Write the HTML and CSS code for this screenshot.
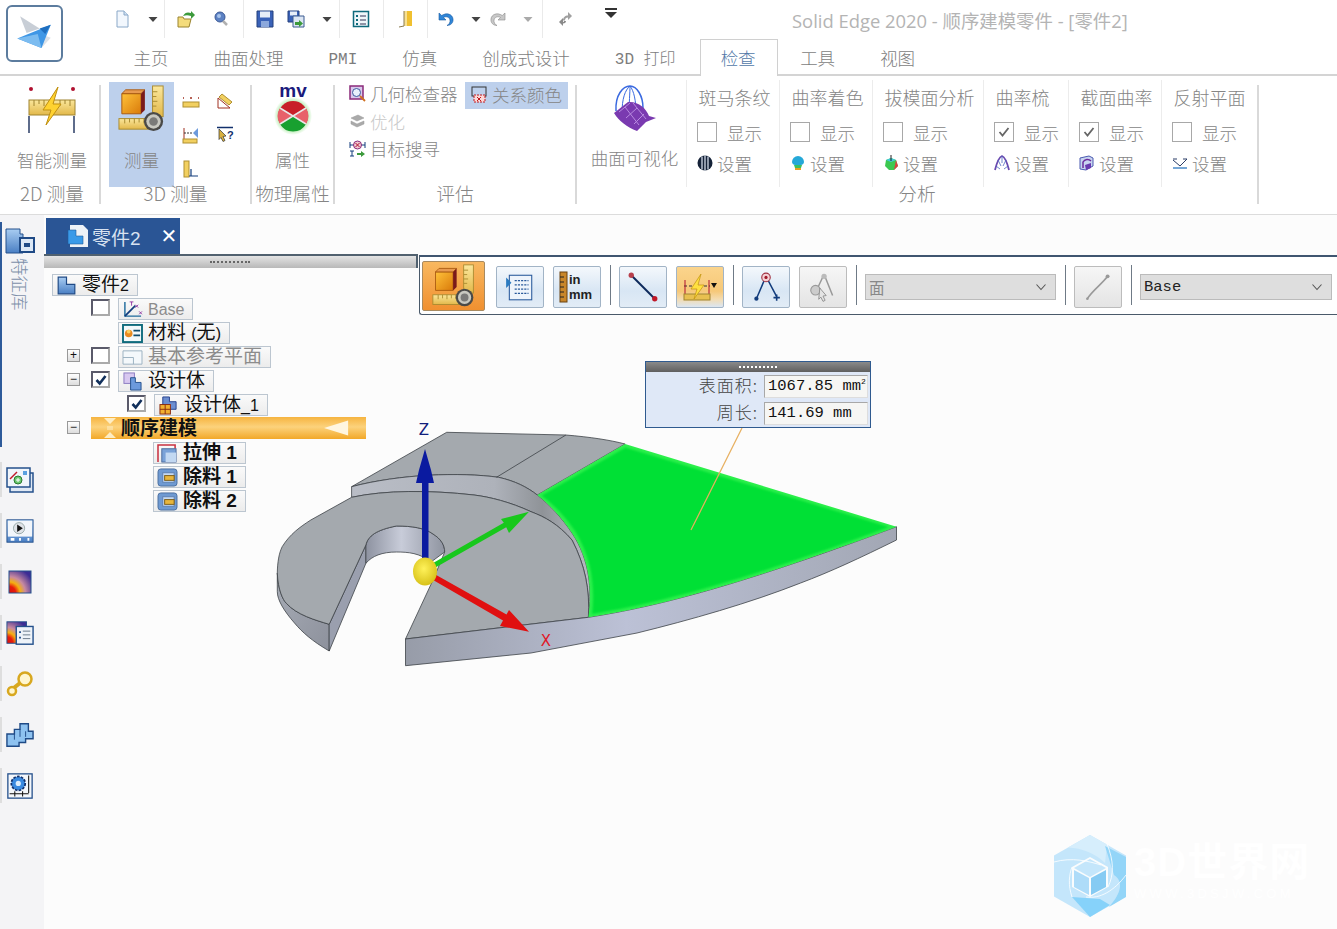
FILE: index.html
```html
<!DOCTYPE html>
<html lang="zh">
<head>
<meta charset="utf-8">
<title>Solid Edge 2020</title>
<link rel="stylesheet" href="styles.css">
</head>
<body>
<svg class="defs" width="0" height="0">
  <defs>
    <linearGradient id="gOrange" x1="0" y1="0" x2="1" y2="1"><stop offset="0" stop-color="#ffc23a"/><stop offset="1" stop-color="#d97a0a"/></linearGradient>
    <linearGradient id="gRuler" x1="0" y1="0" x2="0" y2="1"><stop offset="0" stop-color="#fbe79c"/><stop offset="1" stop-color="#e2b84a"/></linearGradient>
    <linearGradient id="gBlue" x1="0" y1="0" x2="0" y2="1"><stop offset="0" stop-color="#a9cdf2"/><stop offset="1" stop-color="#4a7fc4"/></linearGradient>
    <linearGradient id="gWallFront" x1="0" y1="0" x2="1" y2="0"><stop offset="0" stop-color="#979ca8"/><stop offset=".45" stop-color="#bcc1d6"/><stop offset="1" stop-color="#a2a7b4"/></linearGradient>
    <linearGradient id="gWallStep" x1="0" y1="0" x2="1" y2="0"><stop offset="0" stop-color="#b9bdc6"/><stop offset=".6" stop-color="#aeb2ba"/><stop offset=".8" stop-color="#8f9398"/><stop offset="1" stop-color="#b8bcc4"/></linearGradient>
    <linearGradient id="gHole" x1="0" y1="0" x2="1" y2="0"><stop offset="0" stop-color="#8d92a0"/><stop offset=".45" stop-color="#c8ccd9"/><stop offset="1" stop-color="#8f94a0"/></linearGradient>
    <linearGradient id="gOuter" x1="0" y1="0" x2="1" y2="1"><stop offset="0" stop-color="#a7acb6"/><stop offset="1" stop-color="#8d919c"/></linearGradient>
    <radialGradient id="gSphere" cx=".45" cy=".4" r=".6"><stop offset="0" stop-color="#fff25a"/><stop offset="1" stop-color="#d8c21a"/></radialGradient>
    <radialGradient id="gMv" cx=".5" cy=".5" r=".5"><stop offset=".7" stop-color="#a8e8a0"/><stop offset="1" stop-color="#ffffff"/></radialGradient>
    <radialGradient id="gHeat" cx="0" cy="1" r="1.2"><stop offset="0" stop-color="#d8100c"/><stop offset=".25" stop-color="#e81c0c"/><stop offset=".42" stop-color="#f4b010"/><stop offset=".62" stop-color="#c88aa0"/><stop offset="1" stop-color="#3c2c94"/></radialGradient>
    <filter id="fSoft" x="-5%" y="-5%" width="110%" height="110%"><feGaussianBlur stdDeviation=".9"/></filter>

    <symbol id="sMeasure" viewBox="0 0 50 50">
      <rect x="36" y="1" width="11" height="32" fill="url(#gRuler)" stroke="#a88a30"/>
      <path d="M36 7h5M36 12h4M36 17h5M36 22h4" stroke="#a88a30"/>
      <rect x="1" y="35" width="32" height="11" fill="url(#gRuler)" stroke="#a88a30"/>
      <path d="M7 35v5M12 35v4M17 35v5M22 35v4M27 35v5" stroke="#a88a30"/>
      <path d="M4 9h20v21H4z" fill="url(#gOrange)" stroke="#a85a10"/>
      <path d="M4 9l4-4h20l-4 4z" fill="#e89a50" stroke="#a85a10"/>
      <path d="M24 9l4-4v21l-4 4z" fill="#7a1a1a"/>
      <circle cx="37" cy="38" r="10" fill="#4a4a48"/>
      <circle cx="37" cy="38" r="7.5" fill="#c8c8c0"/>
      <circle cx="37" cy="38" r="4.5" fill="#7a7a78"/>
    </symbol>
    <symbol id="sZebra" viewBox="0 0 16 16">
      <circle cx="8" cy="8" r="7.5" fill="#152238"/>
      <path d="M5 1.5v13M8 .5v15M11 1.5v13" stroke="#dfe8f5" stroke-width="1.2"/>
    </symbol>
    <symbol id="sPart" viewBox="0 0 16 16">
      <path d="M1 1h7v6h7v8H1z" fill="url(#gBlue)" stroke="#1f4a86"/>
    </symbol>
    <symbol id="sCut" viewBox="0 0 22 20">
      <rect x="1" y="1" width="20" height="18" rx="3" fill="#6f9ad2" stroke="#4a6e9e"/>
      <rect x="6" y="5" width="12" height="10" fill="#c6daf2" stroke="#5d7fb0"/>
      <rect x="8" y="8" width="10" height="5" fill="#e8b63c" stroke="#7a5c18"/>
    </symbol>
    <symbol id="sCheckMark" viewBox="0 0 12 12">
      <path d="M1.5 6l3.2 3.5L10.5 2" fill="none" stroke="#12305c" stroke-width="2.6"/>
    </symbol>
    <symbol id="sDown" viewBox="0 0 20 20">
      <path d="M5.5 8h9L10 13z" fill="#444"/>
    </symbol>
    <symbol id="sGrayDown" viewBox="0 0 20 20">
      <path d="M5.5 8h9L10 13z" fill="#aaa"/>
    </symbol>
    <symbol id="sChev" viewBox="0 0 12 8">
      <path d="M1.5 1.5L6 6.5l4.5-5" fill="none" stroke="#555" stroke-width="1.1"/>
    </symbol>
  </defs>
</svg>

<header class="top">
  <div class="appcol">
    <div class="appbtn">
      <svg class="applogo" viewBox="0 0 57 57">
        <path d="M13 10l21 13-14 5z" fill="#c8ced6"/>
        <path d="M36 44l10-11-14-5z" fill="#dde2e8"/>
        <path d="M10 34l36-15-10 25z" fill="#3f97e6"/>
        <path d="M10 34l22-5 4 15z" fill="#7cbcf0"/>
        <path d="M34 23l12-4-6 10z" fill="#1f6fc0"/>
      </svg>
    </div>
  </div>
  <div class="topmain">
    <div class="titlebar">
      <div class="qat">
        <div class="qgrp g1">
          <svg class="qb" viewBox="0 0 20 20"><path d="M5 2h7l4 4v12H5z" fill="#f2f7fd" stroke="#8aa8c8"/><path d="M12 2v4h4" fill="#cfe0f2" stroke="#8aa8c8"/></svg>
          <svg class="qb"><use href="#sDown"/></svg>
        </div>
        <div class="qgrp g2">
          <svg class="qb" viewBox="0 0 20 20"><path d="M2 8h5l1 2h7l-2 8H2z" fill="#f4dc7c" stroke="#9a8430"/><path d="M7 7c2-4 5-4 8-3V2l4 4-4 4V7c-3-1-5-1-8 0z" fill="#3c9a3c"/></svg>
          <svg class="qb" viewBox="0 0 20 20"><circle cx="9" cy="8" r="5" fill="#5c82c4" stroke="#3c5a96"/><circle cx="8" cy="7" r="2" fill="#a8c4ec"/><path d="M12 12l4 4" stroke="#b0b0b0" stroke-width="2.5"/></svg>
        </div>
        <div class="qgrp g3">
          <svg class="qb" viewBox="0 0 20 20"><path d="M2 2h16v16H2z" fill="#3a62b8" stroke="#24407c"/><rect x="5" y="2.500" width="10" height="6" fill="#e8eef8"/><rect x="6" y="12" width="8" height="6" fill="#8ca8dc"/></svg>
          <svg class="qb" viewBox="0 0 20 20"><path d="M2 2h11v11H2z" fill="#3a62b8" stroke="#24407c"/><rect x="4" y="2.500" width="7" height="4" fill="#e8eef8"/><path d="M7 7h11v11H7z" fill="#dce6f4" stroke="#3a5a90"/><path d="M9 13h4v-2l4 3.500-4 3.500v-2H9z" fill="#3c9a3c"/></svg>
          <svg class="qb"><use href="#sDown"/></svg>
        </div>
        <div class="qgrp g4">
          <svg class="qb" viewBox="0 0 20 20"><rect x="2.500" y="2.500" width="15" height="15" fill="#eef6fa" stroke="#0e6a7c" stroke-width="1.500"/><path d="M5 6h2v2H5zM5 10h2v2H5zM5 14h2v2H5z" fill="#0e6a7c"/><path d="M9 7h6M9 11h6M9 15h6" stroke="#335"/></svg>
        </div>
        <div class="qgrp g4">
          <svg class="qb" viewBox="0 0 20 20"><path d="M9 2h8v15H9z" fill="#f0c030"/><path d="M9 2h3v15H9z" fill="#f8e090"/><path d="M9 2v15l-5 1" fill="none" stroke="#8a7a50"/></svg>
        </div>
        <div class="qgrp g6">
          <svg class="qb" viewBox="0 0 20 20"><path d="M3 4v7h7L7.500 8.500C10 7 13.500 8 14 11c.4 2.500-1 4.500-3 5.500 4 0 6.500-3 6-6.500C16.500 5.500 11 3 5.700 6.500z" fill="#2f86d8" stroke="#1c5aa0" stroke-width=".6"/></svg>
          <svg class="qb"><use href="#sDown"/></svg>
          <svg class="qb redo" viewBox="0 0 20 20"><path d="M17 4v7h-7l2.500-2.500C10 7 6.500 8 6 11c-.4 2.500 1 4.500 3 5.500-4 0-6.500-3-6-6.500C3.500 5.500 9 3 14.300 6.500z" fill="#c8c8c8" stroke="#8a8a8a" stroke-width=".6"/></svg>
          <svg class="qb"><use href="#sGrayDown"/></svg>
        </div>
        <div class="qgrp g7">
          <svg class="qb" viewBox="0 0 20 20"><path d="M13 3l4 4-4 4V8.500c-2 0-3 1-3 3H8c0-3 2-5 5-5z" fill="#a0a0a0"/><path d="M8 9l-4 4 4 4v-2.500c2 0 3-1 3-2.500H9c0 1-.5 1-1 1z" fill="#8a8a8a"/></svg>
          <svg class="qb more" viewBox="0 0 20 20"><path d="M4 3h12v2H4z" fill="#333"/><path d="M4 7h12l-6 6z" fill="#333"/></svg>
        </div>
      </div>
      <div class="wintitle">Solid Edge 2020 - 顺序建模零件 - [零件2]</div>
    </div>
    <nav class="tabs">
      <div class="tab">主页</div>
      <div class="tab">曲面处理</div>
      <div class="tab mono">PMI</div>
      <div class="tab">仿真</div>
      <div class="tab">创成式设计</div>
      <div class="tab mono">3D 打印</div>
      <div class="tab active">检查</div>
      <div class="tab">工具</div>
      <div class="tab">视图</div>
    </nav>
  </div>
</header>

<section class="ribbon">
  <div class="group g-2d">
    <div class="gbody center">
      <div class="bigbtn">
        <svg class="bigicon smart" viewBox="0 0 48 48">
          <circle cx="3" cy="3" r="2" fill="#b01030"/><circle cx="45" cy="3" r="2" fill="#b01030"/>
          <rect x="1" y="14" width="46" height="15" fill="url(#gRuler)" stroke="#a08430"/>
          <path d="M6 14v6M11 14v4M16 14v6M32 14v6M37 14v4M42 14v6" stroke="#a08430"/>
          <path d="M1 30v17M46 30v17" stroke="#2a3c66" stroke-width="1.500"/>
          <path d="M30 1L15 24h8l-5 15 15-21h-8z" fill="#ffd230" stroke="#c09010"/>
        </svg>
        <span class="biglabel">智能测量</span>
      </div>
    </div>
    <div class="glabel">2D 测量</div>
  </div>
  <div class="vsep"></div>

  <div class="group g-3d">
    <div class="gbody row3d">
      <div class="bigbtn hl">
        <svg class="bigicon meas"><use href="#sMeasure"/></svg>
        <span class="biglabel">测量</span>
      </div>
      <div class="smgrid">
        <svg class="i18" viewBox="0 0 18 18"><path d="M1 6h1M8 6h2M16 6h1" stroke="#a03020" stroke-width="1.500"/><rect x="1" y="10" width="16" height="5" fill="#f2d060" stroke="#b09030"/></svg>
        <svg class="i18" viewBox="0 0 18 18"><path d="M2 16V6l12 10z" fill="none" stroke="#a03020"/><path d="M6 2l10 8-3 3L3 5z" fill="#f2d060" stroke="#b09030"/></svg>
        <svg class="i18" viewBox="0 0 18 18"><path d="M2 2v12" stroke="#a03020"/><path d="M2 7h9" stroke="#333" stroke-dasharray="2 1"/><path d="M16 2l-5 5 5 5z" fill="#6c9adc"/><rect x="1" y="13" width="14" height="4" fill="#f2d060" stroke="#b09030"/></svg>
        <svg class="i18" viewBox="0 0 18 18"><path d="M1 1.500h16" stroke="#12306c" stroke-width="1.500"/><path d="M3 3l7 7-3 .5 2 4-2 1-2-4-2 2z" fill="#d8b040" stroke="#333" stroke-width=".7"/><text class="qmark" x="11" y="13">?</text></svg>
        <svg class="i18" viewBox="0 0 18 18"><rect x="2" y="1" width="5" height="16" fill="#f2d060" stroke="#b09030"/><path d="M7 16h9M9 9v7" stroke="#123c7c" stroke-width="1.200"/></svg>
      </div>
    </div>
    <div class="glabel">3D 测量</div>
  </div>
  <div class="vsep"></div>

  <div class="group g-prop">
    <div class="gbody center">
      <div class="bigbtn">
        <svg class="bigicon mv" viewBox="0 -8 38 58">
          <text class="mvtext" x="19" y="12">mv</text>
          <circle cx="19" cy="31" r="19" fill="url(#gMv)"/>
          <circle cx="19" cy="31" r="15" fill="#c81f28"/>
          <path d="M19 31L6 39a15 15 0 0 0 26 0z" fill="#18a030"/>
          <path d="M19 31L6 23a15 15 0 0 0 0 16z M19 31l13-8a15 15 0 0 1 0 16z" fill="#e8606a"/>
          <path d="M6 23l26 16M32 23L6 39" stroke="#e8e8e8" stroke-width="1.500"/>
        </svg>
        <span class="biglabel">属性</span>
      </div>
    </div>
    <div class="glabel">物理属性</div>
  </div>
  <div class="vsep"></div>

  <div class="group g-eval">
    <div class="gbody evalgrid">
      <div class="evalcol">
        <div class="smrow">
          <svg class="i17" viewBox="0 0 17 17"><rect x="1" y="1" width="13" height="13" fill="#d8c8ec" stroke="#8a2a7a" stroke-width="1.500"/><circle cx="7.500" cy="7.500" r="4" fill="#e8f0fc" stroke="#3a5a9c"/><path d="M11 11l5 5" stroke="#d07020" stroke-width="1.800"/></svg>
          <span>几何检查器</span>
        </div>
        <div class="smrow disabled">
          <svg class="i17" viewBox="0 0 17 17"><path d="M2 5l7-3 6 3-7 3zM2 8l6 3 7-3v3l-7 3-6-3z" fill="#aaa" stroke="#999" stroke-width=".5"/></svg>
          <span>优化</span>
        </div>
        <div class="smrow">
          <svg class="i17" viewBox="0 0 17 17"><path d="M1 2v6M16 2v6M1 5h15" stroke="#123c7c"/><circle cx="8.500" cy="5" r="4" fill="#f0c8d0" stroke="#8a2a7a"/><path d="M6.500 3l4 4M10.500 3l-4 4" stroke="#b01030"/><path d="M1 11h4M3 11v5M1 16h4" stroke="#123c7c"/><path d="M8 13h4v-2l4 3-4 3v-2H8z" fill="#3c9a3c"/></svg>
          <span>目标搜寻</span>
        </div>
      </div>
      <div class="smrow hl relcolor">
        <svg class="i17" viewBox="0 0 17 17"><rect x="1" y="1" width="14" height="9" fill="none" stroke="#333"/><rect x="3" y="9" width="11" height="7" fill="#fbd8d8" stroke="#c0181c" stroke-dasharray="2 1"/><path d="M6 11l4 4M10 11l-4 4" stroke="#c0181c"/></svg>
        <span>关系颜色</span>
      </div>
    </div>
    <div class="glabel">评估</div>
  </div>
  <div class="vsep"></div>

  <div class="group g-ana">
    <div class="gbody analysis">
      <div class="sub s-vis">
        <div class="bigbtn">
          <svg class="bigicon vis" viewBox="0 0 44 48">
            <path d="M3 26C2 10 10 1 17 1s13 10 13 22" fill="none" stroke="#3a6ae0" stroke-width="1.500"/>
            <path d="M9 28C9 14 12 5 17 1M16 30C16 18 17 8 17 1M23 28C23 16 21 6 17 1" fill="none" stroke="#3a6ae0"/>
            <path d="M1 28l14-11c10-1 18 6 21 14l7 2-10 4-9 9C14 42 6 36 1 28z" fill="#7a3ab0"/>
            <path d="M6 27l11-9M13 33l11-10M21 39l10-10M12 22l14 18M20 18l13 16" stroke="#b88ae0"/>
          </svg>
          <span class="biglabel">曲面可视化</span>
        </div>
      </div>
      <div class="sub s92">
        <div class="subtitle">斑马条纹</div>
        <div class="chkrow"><span class="chk"></span><span>显示</span></div>
        <div class="setrow"><svg class="i16"><use href="#sZebra"/></svg><span>设置</span></div>
      </div>
      <div class="sub s93">
        <div class="subtitle">曲率着色</div>
        <div class="chkrow"><span class="chk"></span><span>显示</span></div>
        <div class="setrow">
          <svg class="i16" viewBox="0 0 16 16"><path d="M2 7a6 6 0 0 1 12 0c0 2-2 3-3 3H5C4 10 2 9 2 7z" fill="#25a8d8"/><path d="M4 10h8l-1 3H5z" fill="#3cc060"/><path d="M5 13h6v2H5z" fill="#e8a020"/></svg>
          <span>设置</span>
        </div>
      </div>
      <div class="sub s111">
        <div class="subtitle">拔模面分析</div>
        <div class="chkrow"><span class="chk"></span><span>显示</span></div>
        <div class="setrow">
          <svg class="i16" viewBox="0 0 16 16"><path d="M3 5l5-2 5 2 2 6-4 4H6l-4-4z" fill="#3cc850"/><path d="M13 5l2 6-4 4z" fill="#d84040"/><path d="M3 5l5-2 5 2-5 2z" fill="#40c8d8"/><path d="M8 6V0" stroke="#222"/></svg>
          <span>设置</span>
        </div>
      </div>
      <div class="sub s85">
        <div class="subtitle">曲率梳</div>
        <div class="chkrow"><span class="chk on"><svg class="tick" viewBox="0 0 12 12"><path d="M1.500 6l3 3.500L10.500 2" fill="none" stroke="#666" stroke-width="1.800"/></svg></span><span>显示</span></div>
        <div class="setrow">
          <svg class="i16" viewBox="0 0 16 16"><path d="M1 15C3 7 5 2 8 1c3 1 5 6 7 14" fill="none" stroke="#6a4ab0" stroke-width="1.800"/><path d="M8 1v7M4 5l3 6M12 5l-3 6M2 11l4 3M14 11l-4 3" stroke="#4a6ac0" stroke-width=".8"/></svg>
          <span>设置</span>
        </div>
      </div>
      <div class="sub s93">
        <div class="subtitle">截面曲率</div>
        <div class="chkrow"><span class="chk on"><svg class="tick" viewBox="0 0 12 12"><path d="M1.500 6l3 3.500L10.500 2" fill="none" stroke="#666" stroke-width="1.800"/></svg></span><span>显示</span></div>
        <div class="setrow">
          <svg class="i16" viewBox="0 0 16 16"><path d="M1 3l9-2 4 2v8l-7 4-6-1z" fill="#c8d4f0" stroke="#4a5ab0"/><path d="M4 13V7a5 5 0 0 1 8-1" fill="none" stroke="#6a2a9c" stroke-width="1.500"/><path d="M6 10l6-2v5l-5 2z" fill="#6a3ab0"/></svg>
          <span>设置</span>
        </div>
      </div>
      <div class="sub s95">
        <div class="subtitle">反射平面</div>
        <div class="chkrow"><span class="chk"></span><span>显示</span></div>
        <div class="setrow">
          <svg class="i16" viewBox="0 0 16 16"><path d="M1 5l7 6 7-7M1 4h4M11 4h4" fill="none" stroke="#2a3c66"/><path d="M1 13h14" stroke="#4a8ac8" stroke-width="1.500"/></svg>
          <span>设置</span>
        </div>
      </div>
    </div>
    <div class="glabel">分析</div>
  </div>
  <div class="vsep"></div>
</section>

<main class="main">
  <aside class="rail">
    <div class="railtab">
      <svg class="railhead" viewBox="0 0 30 26">
        <path d="M1 1h14v5h3v19H1z" fill="url(#gBlue)" stroke="#24508c"/>
        <rect x="15" y="10" width="14" height="14" fill="#dce8f6" stroke="#1f4a86" stroke-width="2"/>
        <rect x="19" y="15" width="6" height="4" fill="#1f4a86"/>
      </svg>
      <div class="railtext">特征库</div>
    </div>
    <div class="railicons">
      <div class="rcell">
        <svg class="ri" viewBox="0 0 28 26"><rect x="4" y="6" width="23" height="19" fill="#dfe8f4" stroke="#24508c" stroke-width="1.500"/><rect x="1" y="1" width="23" height="19" fill="#f0f5fb" stroke="#24508c" stroke-width="1.500"/><path d="M4 12l7-7" stroke="#c01828" stroke-width="1.500"/><circle cx="12" cy="13" r="4" fill="#6cc870" stroke="#2a7a30"/><path d="M10 13h4M12 11v4" stroke="#fff"/><rect x="17" y="4" width="4" height="4" fill="#5aa0e0"/></svg>
      </div>
      <div class="rcell">
        <svg class="ri" viewBox="0 0 30 26"><rect x="1" y="1" width="28" height="24" fill="url(#gBlue)" stroke="#24508c"/><rect x="2" y="2" width="26" height="17" fill="#f2f6fb"/><circle cx="14" cy="10" r="6" fill="#dfe3e8" stroke="#9aa"/><path d="M12 6l6 4-6 4z" fill="#111"/><path d="M5 22h4M14 22h2M23 22h2" stroke="#fff" stroke-width="3"/></svg>
      </div>
      <div class="rcell">
        <svg class="ri" viewBox="0 0 26 26"><rect x="2" y="2" width="22" height="22" fill="url(#gHeat)" stroke="#24508c"/></svg>
      </div>
      <div class="rcell">
        <svg class="ri" viewBox="0 0 30 26"><rect x="1" y="1" width="21" height="23" fill="url(#gHeat)" stroke="#24508c"/><rect x="11" y="6" width="18" height="19" fill="#eef3f9" stroke="#24508c" stroke-width="1.500"/><path d="M14 11h2v2h-2zM14 17h2v2h-2z" fill="#24508c"/><path d="M18 11h8M18 15h8M18 19h8" stroke="#678"/></svg>
      </div>
      <div class="rcell">
        <svg class="ri" viewBox="0 0 28 26"><circle cx="19" cy="8" r="6.500" fill="#fff6d0" stroke="#d8a820" stroke-width="2.500"/><path d="M14 12L4 20" stroke="#d8a820" stroke-width="4"/><circle cx="6" cy="20" r="4" fill="#fff6d0" stroke="#d8a820" stroke-width="2.500"/></svg>
      </div>
      <div class="rcell">
        <svg class="ri" viewBox="0 0 30 26"><path d="M1 12h8V7h6V1h9v8h5v8h-8v4h-7v4H1z" fill="#8ec2f0" stroke="#1f4a86" stroke-width="1.500"/><path d="M9 12v6M15 7v8M21 9v6" stroke="#1f4a86"/></svg>
      </div>
      <div class="rcell">
        <svg class="ri" viewBox="0 0 30 30"><rect x="1" y="1" width="28" height="28" fill="#f4f7fb" stroke="#24508c" stroke-width="1.500"/><circle cx="13" cy="12" r="8" fill="#3a8ae0" stroke="#12306c" stroke-width="2" stroke-dasharray="3 1.500"/><circle cx="13" cy="12" r="3" fill="#dcecfb"/><path d="M25 3v20M3 24h22M9 21v6M18 21v6" stroke="#111" stroke-width="1.200"/></svg>
      </div>
    </div>
  </aside>

  <div class="workspace">
    <div class="tabstrip">
      <div class="doctab">
        <svg class="docicon" viewBox="0 0 22 24"><path d="M3 1h13l5 5v17H3z" fill="#eef2f7"/><path d="M1 6h8v6h7v8H1z" fill="#3a9ae8" stroke="#1f5a9c" stroke-width=".6"/></svg>
        <span class="docname">零件2</span>
        <span class="docclose">✕</span>
      </div>
    </div>
    <div class="grip"><span class="dots"></span></div>

    <div class="tree">
      <div class="row">
        <div class="chip">
          <svg class="chipicon"><use href="#sPart"/></svg><span>零件<i class="la">2</i></span>
        </div>
      </div>
      <div class="row l1">
        <span class="tc"></span>
        <div class="chip muted">
          <svg class="chipicon" viewBox="0 0 22 20"><path d="M3 2v15h17" fill="none" stroke="#1f6a9c" stroke-width="1.500"/><path d="M3 17L14 6" stroke="#123c7c" stroke-width="1.800"/><path d="M8 2h4M10 2v4M14 5l3 3M17 5l-3 3M18 12l3 3M21 12l-3 3" stroke="#8a2a9c" stroke-width=".9"/></svg><span><i class="la">Base</i></span>
        </div>
      </div>
      <div class="row l2">
        <div class="chip">
          <svg class="chipicon" viewBox="0 0 22 20"><rect x="1" y="1" width="20" height="18" fill="#f2f8fa" stroke="#0e6a7c" stroke-width="2"/><circle cx="7" cy="10" r="4" fill="#e88a20"/><circle cx="7" cy="8" r="2" fill="#f8d060"/><path d="M12 7h7M12 12h7" stroke="#0e4a6c" stroke-width="1.800"/></svg><span>材料 <i class="la">(</i>无<i class="la">)</i></span>
        </div>
      </div>
      <div class="row l0">
        <span class="exp">+</span><span class="tc"></span>
        <div class="chip muted">
          <svg class="chipicon" viewBox="0 0 22 20"><path d="M1 3h20v14H1z" fill="#f4f8fb" stroke="#9ab0c0"/><path d="M1 10h11v7" fill="none" stroke="#9ab0c0"/></svg><span>基本参考平面</span>
        </div>
      </div>
      <div class="row l0">
        <span class="exp">−</span><span class="tc"><svg class="cm"><use href="#sCheckMark"/></svg></span>
        <div class="chip">
          <svg class="chipicon" viewBox="0 0 22 20"><rect x="2" y="1" width="11" height="11" fill="#d8c8f0" stroke="#8a7ac0"/><path d="M9 6h5v5h6v8H9z" fill="#6c9adc" stroke="#24508c"/></svg><span>设计体</span>
        </div>
      </div>
      <div class="row l3">
        <span class="tc"><svg class="cm"><use href="#sCheckMark"/></svg></span>
        <div class="chip">
          <svg class="chipicon" viewBox="0 0 22 20"><path d="M5 1h7v5h7v8H5z" fill="#6c8ed0" stroke="#24408c"/><rect x="2" y="9" width="11" height="10" fill="#f2b030" stroke="#8a2a10"/><path d="M7.500 9v10M2 14h11" stroke="#8a2a10"/></svg><span>设计体<i class="la">_1</i></span>
        </div>
      </div>
      <div class="row l0">
        <span class="exp">−</span>
        <div class="seqbar">
          <svg class="seqgrip" viewBox="0 0 14 22"><path d="M1 1h12L7 7zM1 21h12L7 15z" fill="#fff3d0"/><path d="M4 10h6M4 12h6" stroke="#fff3d0"/></svg>
          <span>顺序建模</span>
          <svg class="seqarrow" viewBox="0 0 28 16"><path d="M26 0v16L0 8z" fill="#fff6e0"/></svg>
        </div>
      </div>
      <div class="row l4">
        <div class="chip bold">
          <svg class="chipicon" viewBox="0 0 22 20"><path d="M1 19V1h18v4" fill="none" stroke="#c83040" stroke-width="1.600"/><rect x="5" y="5" width="15" height="14" fill="#7aa2d8" stroke="#4a6a9c"/><rect x="9" y="9" width="11" height="10" fill="#c2d8f2"/></svg><span>拉伸 1</span>
        </div>
      </div>
      <div class="row l4">
        <div class="chip bold"><svg class="chipicon"><use href="#sCut"/></svg><span>除料 1</span></div>
      </div>
      <div class="row l4">
        <div class="chip bold"><svg class="chipicon"><use href="#sCut"/></svg><span>除料 2</span></div>
      </div>
    </div>

    <div class="cmdbar">
      <div class="cbtn big on"><svg class="cbigicon"><use href="#sMeasure"/></svg></div>
      <div class="cbtn">
        <svg class="cicon" viewBox="0 0 30 30"><rect x="5" y="4" width="21" height="23" fill="#eef4fb" stroke="#2a5a9c"/><path d="M2 6l5 5-5 5z" fill="#2a7ac0"/><path d="M10 9h13M10 13h13M10 17h13M10 21h13" stroke="#2a5a9c" stroke-dasharray="2 1"/></svg>
      </div>
      <div class="cbtn">
        <svg class="cicon" viewBox="0 0 36 32"><rect x="1" y="1" width="7" height="30" fill="#c8862a" stroke="#6a4210"/><path d="M1 6h4M1 11h4M1 16h4M1 21h4M1 26h4" stroke="#222"/><text class="inmm" x="10" y="13">in</text><text class="inmm" x="10" y="28">mm</text></svg>
      </div>
      <div class="csep"></div>
      <div class="cbtn">
        <svg class="cicon" viewBox="0 0 30 30"><path d="M4 4l22 22" stroke="#0e2a5c" stroke-width="1.800"/><circle cx="4" cy="4" r="2.500" fill="#b8404c"/><circle cx="26" cy="26" r="2.500" fill="#c01828"/></svg>
      </div>
      <div class="cbtn warm">
        <svg class="cicon" viewBox="0 0 36 30"><path d="M2 14h26" stroke="#333" stroke-dasharray="3 2"/><path d="M3 8v16M27 8v16" stroke="#b01030"/><rect x="2" y="22" width="26" height="6" fill="#e8c050" stroke="#a08430"/><path d="M19 2L9 17h6l-3 10 10-14h-6z" fill="#ffe040" stroke="#c09010" stroke-width=".7"/><path d="M29 11h6l-3 5z" fill="#111"/></svg>
      </div>
      <div class="csep"></div>
      <div class="cbtn">
        <svg class="cicon" viewBox="0 0 30 30"><path d="M15 5L6 26M15 5l10 19" stroke="#123c7c" stroke-width="1.400" fill="none"/><circle cx="15" cy="6" r="4" fill="#f4d0d4" stroke="#a03040"/><circle cx="15" cy="6" r="1.500" fill="#a01828"/><circle cx="6" cy="26" r="2" fill="#123c7c"/><path d="M22 25h6M25 22v6" stroke="#123c7c" stroke-width="1.500"/></svg>
      </div>
      <div class="cbtn off">
        <svg class="cicon" viewBox="0 0 30 30"><path d="M16 3L9 18M16 3l8 20" stroke="#999" stroke-width="1.400" fill="none"/><circle cx="16" cy="5" r="2.500" fill="#bbb"/><circle cx="8" cy="18" r="4.500" fill="#ccc" stroke="#999"/><path d="M12 16l6 7-3 .5 2 4-2 1-2-4-2 2z" fill="#e4e4e4" stroke="#888" stroke-width=".8"/></svg>
      </div>
      <div class="csep"></div>
      <div class="csel face"><span>面</span><svg class="chev"><use href="#sChev"/></svg></div>
      <div class="csep"></div>
      <div class="cbtn off">
        <svg class="cicon" viewBox="0 0 30 30"><path d="M5 26C10 18 19 12 24 5" fill="none" stroke="#999" stroke-width="1.500"/><circle cx="24" cy="5" r="1.800" fill="#999"/><circle cx="5" cy="26" r="1.200" fill="#999"/></svg>
      </div>
      <div class="csep"></div>
      <div class="csel base"><span>Base</span><svg class="chev"><use href="#sChev"/></svg></div>
    </div>

    <svg class="model" viewBox="270 420 640 260">
      <path class="edge" fill="url(#gOuter)" d="M277.300 573C278 590 283 600 286.300 603.300C297 615 315 620 329.200 624.300V651C312 641 302 632 294.500 623C284 611 277.300 600 277.300 591.700Z"/>
      <path class="edge" fill="#9a9fae" d="M329.200 624.300L365.900 545V563.300L329.200 651Z"/>
      <path class="edge" fill="url(#gHole)" d="M365.900 545C368 536 376 530 396.500 526C412 526 425 528 433 534C441 539 444.700 545 444.700 552L431 562C420 553 408 552 396.500 552C382 552 372 556 365.900 563.300Z"/>
      <path class="edge" fill="#a4a9ae" d="M351.600 486.700L446.700 432.300L565.900 435C590 437 610 440 625.100 444L537.300 495C527 487 515 481 498.600 477.300C460 472 400 474 351.600 486.700Z"/>
      <path class="edge" fill="url(#gWallStep)" d="M351.600 486.700C400 474 460 472 498.600 477.300C515 481 527 487 537.300 495C550 505 562 518 572 533C590 560 592 590 588.400 617.300C590 590 585 565 572 540C558 524 545 517 531 511.700C510 502 490 497 474 495C430 490 385 490 351.600 497.300Z"/>
      <path class="edge" fill="#a4a9ae" d="M351.600 497.300C385 490 430 490 474 495C490 497 510 502 531 511.700C545 517 558 524 572 540C585 565 590 590 588.400 617.300L405.500 639L433 580L444.700 552C444.700 545 441 539 433 534C425 528 412 526 396.500 526C376 530 368 536 365.900 545L329.200 624.300C315 620 297 615 286.300 603.300C283 600 278 590 277.300 573C277.500 562 279 553 282.200 546.700C290 534 300 527 310.800 520Z"/>
      <path class="edge" fill="url(#gWallFront)" d="M405.500 639L588.400 617.300C660 606 740 585 896.500 526.700V540C860 558 830 572 800.600 583C750 603 690 620 637 633L531 653L405.500 665.700Z"/>
      <path class="edge thin" d="M496.500 477.300L565.900 435"/>
      <path class="greenglow" d="M537.300 495L625.100 444L896.500 526.700C740 585 660 606 588.400 617.300C592 590 590 560 572 533C562 518 550 505 537.300 495Z"/>
      <path class="green" d="M541.500 495.500L625.500 447.500L889 527C740 582 660 603 592 614C595 590 593 560 575 531C565 516 554 505 541.500 495.500Z"/>
      <path class="leader" d="M742 428L691 530"/>
      <path fill="#0a1aa0" d="M422 572V483H416L419 470L425 449L431 470L434 483H428.500V572Z"/>
      <path fill="#18c81c" d="M431.800 563.800L503.800 522.800L501 519L529 511.700L509 533L506.200 527.200L434.200 568.200Z"/>
      <path fill="#e01010" d="M433.500 573.400L506.500 614.400L509 610L529 631.700L500 626L503 620.600L430.500 578.600Z"/>
      <ellipse cx="425" cy="571.500" rx="12" ry="14" fill="url(#gSphere)"/>
      <text class="axis zaxis" x="424" y="435">Z</text>
      <text class="axis xaxis" x="546" y="646">X</text>
    </svg>

    <div class="popup">
      <div class="pophead"><span class="dots short"></span></div>
      <div class="popbody">
        <div class="poprow"><label>表面积:</label><div class="popval">1067.85 mm<sup>2</sup></div></div>
        <div class="poprow"><label>周长:</label><div class="popval">141.69 mm</div></div>
      </div>
    </div>

    <div class="watermark">
      <svg class="wmlogo" viewBox="0 0 72 82">
        <path d="M36 0l36 20.500v41L36 82 0 61.500v-41z" fill="#c4e6fb"/>
        <path d="M36 0L14 12.500C28 13 42 19 51 28L53 9.500z" fill="#d6eefc"/>
        <path d="M51 11l21 11v40L55 72C64 62 72 48 60 40z" fill="#93d5f8"/>
        <path d="M18 62l18 20 20-12-10-6z" fill="#86d2fa"/>
        <path d="M36 22l18 10v20L36 62 18 52V32z" fill="#fafcfd"/>
        <path d="M36 24l16 9-16 9-16-9z" fill="#c4e6fb"/>
        <path d="M20 35l15 8v17l-15-8z" fill="#aedcf9"/>
        <path d="M52 35l-15 8v17l15-8z" fill="#86cbf3"/>
        <path d="M0 27C18 22 34 26 47 30M53 9C60 26 60 40 54 52M72 40C60 56 46 64 32 62M18 62C14 50 15 40 18 32" fill="none" stroke="#fff" stroke-width=".8"/>
      </svg>
      <div class="wmtext">
        <div class="wmbig">3D世界网</div>
        <div class="wmsmall">WWW.3DSJW.COM</div>
      </div>
    </div>
  </div>
</main>
</body>
</html>
```

FILE: styles.css
```css
* { box-sizing: border-box; }
html, body { margin: 0; padding: 0; }
body {
  width: 1337px;
  height: 929px;
  overflow: hidden;
  background: #fff;
  font-family: "Liberation Sans", "Noto Sans CJK SC", sans-serif;
  color: #858585;
  display: flex;
  flex-direction: column;
}
.defs { position: absolute; }

/* top */
.top { display: flex; height: 76px; flex: none; border-bottom: 2px solid #d4d4d4; }
.appcol { width: 108px; flex: none; padding: 5px 0 0 6px; }
.appbtn { width: 57px; height: 57px; border: 2px solid #5c7c9e; border-radius: 6px; background: #fff; }
.applogo { display: block; width: 53px; height: 53px; }
.topmain { flex: 1; display: flex; flex-direction: column; }
.titlebar { display: flex; height: 41px; align-items: flex-start; }
.qat { display: flex; height: 38px; }
.qgrp { display: flex; align-items: center; gap: 11px; padding: 0 1px 0 11px; border-right: 1px solid #eaeaea; }
.qb { width: 20px; height: 20px; flex: none; }
.g1 { padding-left: 4px; }
.g2 { gap: 15px; padding-right: 12px; }
.g3 { padding-right: 2px; }
.g4 { padding-right: 12px; }
.g6 { padding: 0 4px 0 8px; gap: 10px; }
.redo { margin-left: -8px; }
.g7 { padding-left: 12px; border-right: 0; gap: 26px; }
.more { margin-top: -8px; }
.wintitle { margin: 9px 0 0 170px; font: 18.400px/24px "Open Sans", "Noto Sans CJK SC", sans-serif; color: #b4b4b4; white-space: nowrap; }
.tabs { display: flex; margin-left: 3px; height: 35px; }
.tab { padding: 0 21.500px; font-size: 17.500px; line-height: 35px; height: 35px; color: #7d7d7d; border: 1px solid transparent; border-bottom: 0; white-space: nowrap; font-family: "Noto Sans CJK SC", sans-serif; font-weight: 300; }
.tab.mono { font-family: "Liberation Mono", "Noto Sans CJK SC", monospace; font-size: 16px; line-height: 40px; }
.tab.active { color: #5278a8; border-color: #d0d0d0; background: #fff; height: 37px; position: relative; z-index: 1; margin-left: 1.500px; padding: 0 21px 0 20px; }

/* ribbon */
.ribbon { display: flex; height: 139px; flex: none; padding-top: 6px; border-bottom: 1px solid #dcdcdc; font-family: "Noto Sans CJK SC", sans-serif; font-weight: 300; color: #858585; font-size: 17.500px; }
.vsep { width: 2px; height: 119px; margin-top: 3px; background: #d9d9d9; flex: none; }
.group { display: flex; flex-direction: column; flex: none; }
.gbody { height: 99px; display: flex; }
.gbody.center { justify-content: center; }
.glabel { height: 24px; line-height: 24px; font-size: 18.700px; text-align: center; color: #858585; white-space: nowrap; }
.g-2d { width: 99px; padding-left: 5px; }
.g-3d { width: 149px; }
.g-prop { width: 81px; }
.g-eval { width: 240px; }
.g-ana { width: 680px; }
.bigbtn { display: flex; flex-direction: column; align-items: center; width: 100%; white-space: nowrap; }
.bigicon { display: block; }
.biglabel { line-height: 24px; display: block; }
.smart { width: 48px; height: 48px; margin: 4px 0 14px; }
.mv { width: 38px; height: 58px; margin: -5px 0 13px; }
.meas { width: 48px; height: 48px; margin: 3px 0 15px; }
.vis { width: 44px; height: 48px; margin: 5px 0 13px; }
.row3d { padding-left: 8px; }
.bigbtn.hl { width: 65px; height: 105px; background: #bdd0ec; flex: none; }
.smgrid { display: grid; grid-template-columns: 18px 18px; grid-auto-rows: 18px; gap: 16px; margin: 10px 0 0 8px; align-content: start; }
.i18 { width: 18px; height: 18px; }
.i17 { width: 17px; height: 17px; flex: none; }
.i16 { width: 16px; height: 16px; flex: none; }
.qmark { font: bold 11px "Liberation Sans", sans-serif; fill: #12306c; }
.mvtext { font: bold 19px "Liberation Sans", sans-serif; fill: #1a1a7c; text-anchor: middle; }
.evalgrid { padding-left: 14px; }
.evalcol { display: flex; flex-direction: column; width: 116px; margin-top: -2px; }
.smrow { display: flex; align-items: center; gap: 4px; height: 27.500px; white-space: nowrap; }
.smrow.disabled { color: #c8c8c8; }
.smrow.hl.relcolor { background: #bdd0ec; width: 103px; padding-left: 6px; height: 27px; padding-bottom: 3px; }
.sub { flex: none; padding-left: 10px; border-right: 1px solid #ececec; height: 107px; margin-top: -2px; }
.s-vis { width: 110px; padding: 0 0 0 6px; }
.s92 { width: 93px; }
.s93 { width: 93px; }
.s111 { width: 111px; }
.s85 { width: 85px; }
.s95 { width: 94px; border-right: 0; }
.subtitle { margin: 5px 0 0 1.500px; font-size: 18px; line-height: 24px; white-space: nowrap; }
.chkrow { display: flex; align-items: center; gap: 10px; height: 20px; margin-top: 13px; }
.chk { width: 20px; height: 20px; border: 1px solid #a8a8a8; background: #fff; display: flex; align-items: center; justify-content: center; flex: none; }
.tick { width: 12px; height: 12px; }
.setrow { display: flex; align-items: center; gap: 4px; height: 20px; margin-top: 11px; }

/* main */
.main { flex: 1; display: flex; min-height: 0; background: #fcfcfc; }
.rail { width: 44px; flex: none; background: #f4f4f6; padding-top: 7px; }
.railtab { height: 225px; border-left: 2px solid #2d5a9a; padding: 6px 0 0 3px; }
.railhead { display: block; width: 30px; height: 26px; }
.railtext { writing-mode: vertical-rl; text-orientation: sideways; margin: 4px 0 0 5px; font: 300 17.500px/20px "Noto Sans CJK SC", sans-serif; color: #7d90aa; }
.railicons { display: flex; flex-direction: column; gap: 16px; margin-top: 15px; }
.rcell { height: 35px; border-left: 2px solid #dedede; display: flex; align-items: center; padding-left: 4px; }
.ri { width: 28px; height: 26px; }

.workspace { flex: 1; position: relative; min-width: 0; }
.tabstrip { height: 39px; padding: 3px 0 0 2px; }
.doctab { width: 134px; height: 36px; background: #2a5595; display: flex; align-items: center; padding-left: 21px; color: #dfe7f2; }
.docicon { width: 22px; height: 24px; flex: none; }
.docname { margin-left: 3px; font-size: 19px; color: #d8e2f0; }
.docclose { margin-left: 20px; font: bold 20px "DejaVu Sans", sans-serif; color: #fff; }
.grip { width: 374px; height: 14px; background: linear-gradient(#e4e4e4, #b8b8b8); border-top: 2px solid #51616f; border-right: 2px solid #51616f; display: flex; align-items: center; justify-content: center; }
.dots { width: 40px; border-top: 2px dotted #666; }
.dots.short { width: 38px; border-top-color: #fff; }

.tree { padding: 6px 0 0 8px; font-size: 19px; color: #111; }
.row { height: 24px; display: flex; align-items: flex-start; }
.l0 { padding-left: 15px; }
.l1 { padding-left: 39px; }
.l2 { padding-left: 66px; }
.l3 { padding-left: 75px; }
.l4 { padding-left: 101px; }
.chip { height: 22px; display: flex; align-items: center; padding: 0 8px 0 3px; border: 1px solid #bcc6d0; background: linear-gradient(#fafafa, #ececec); white-space: nowrap; line-height: 20px; }
.chip > span { margin-left: 5px; }
.la { font-style: normal; font-size: 16px; }
.chipicon { width: 21px; height: 19px; flex: none; }
.chip.muted { color: #8c8c8c; }
.chip.bold { font-weight: bold; }
.exp { width: 13px; height: 13px; margin: 3px 11px 0 0; border: 1px solid #999; background: linear-gradient(#fff, #ddd); font: 12px/10px "Liberation Sans", sans-serif; text-align: center; color: #111; flex: none; }
.tc { width: 19px; height: 17px; margin: 1px 8px 0 0; border: 2px solid #5a5a6a; border-right-color: #aaa; border-bottom-color: #aaa; background: #fff; flex: none; display: flex; align-items: center; justify-content: center; }
.cm { width: 12px; height: 12px; }
.seqbar { width: 275px; height: 22px; margin-top: -1px; display: flex; align-items: center; background: linear-gradient(#f6b440, #fcd27c 45%, #f2a828); padding: 0 0 3px 13px; font-weight: bold; color: #111; position: relative; }
.seqgrip { position: absolute; left: 12px; top: 0; width: 14px; height: 22px; opacity: .9; }
.seqbar > span { margin-left: 17px; }
.seqarrow { margin-left: auto; margin-right: 16px; margin-top: 3px; width: 26px; height: 16px; }

/* command bar */
.cmdbar { position: absolute; left: 375px; top: 40px; width: 918px; height: 60px; background: #fff; border-top: 2px solid #3f5570; border-left: 1px solid #4a5a6a; border-bottom: 1px solid #4a5a6a; border-bottom-left-radius: 3px; display: flex; align-items: center; padding: 0 0 0 2px; color: #333; }
.cbtn { width: 48px; height: 42px; flex: none; margin-top: 3px; border: 1px solid #a2b4c6; border-radius: 2px; background: linear-gradient(#f4f8fc, #d8e6f4 60%, #e2ecf6); display: flex; align-items: center; justify-content: center; }
.cbtn + .cbtn { margin-left: 9px; }
.cbtn.big { width: 63px; height: 50px; margin: 0 11px 0 0; background: linear-gradient(#f8b860, #f09030); border-color: #a88a60; }
.cbtn.big + .cbtn { margin-left: 0; }
.cbigicon { width: 48px; height: 44px; }
.cbtn.warm { background: linear-gradient(#fbd48c, #f6c878 60%, #f4dcb0 80%, #dbe6f2); }
.cbtn.off { background: linear-gradient(#f6f6f6, #e4e4e4); border-color: #bcbcbc; }
.cicon { width: 36px; height: 32px; }
.csep { width: 1px; height: 40px; margin: 0 8px 2px 9px; background: #6f7a86; flex: none; }
.csel { height: 26px; margin-top: 3px; background: #dedede; border: 1px solid #bbb; display: flex; align-items: center; justify-content: space-between; padding: 0 8px 0 3px; font: 15.500px "Liberation Mono", "Noto Sans CJK SC", monospace; color: #444; flex: none; }
.csel.face { width: 191px; color: #888; }
.csel.base { width: 192px; color: #222; }
.chev { width: 12px; height: 8px; }

/* model */
.model { position: absolute; left: 226px; top: 205px; width: 640px; height: 260px; }
.edge { stroke: #3e4248; stroke-width: .8; stroke-linejoin: round; }
.edge.thin { fill: none; }
.green { fill: #00e035; filter: url(#fSoft); }
.greenglow { fill: #2cf04c; }
.leader { stroke: #e8b060; stroke-width: 1.200; fill: none; }
.axis { font: 15px "DejaVu Sans", sans-serif; text-anchor: middle; }
.zaxis { fill: #12207c; }
.xaxis { fill: #e01828; }
.inmm { font: bold 13px "Liberation Sans", sans-serif; fill: #222; }

/* popup */
.popup { position: absolute; left: 601px; top: 146px; width: 226px; height: 67px; border: 1px solid #2f5a8f; background: #dfe8f7; }
.pophead { height: 10px; background: linear-gradient(#8a8a8a, #5f5f5f); display: flex; align-items: center; justify-content: center; }
.popbody { padding: 3px 2px 0 0; }
.poprow { display: flex; align-items: center; justify-content: flex-end; height: 23px; margin-bottom: 4px; }
.poprow label { font: 300 17px/20px "Noto Sans CJK SC", sans-serif; color: #444; letter-spacing: 1px; margin-right: 6px; padding-bottom: 3px; }
.popval { width: 104px; height: 23px; flex: none; background: #f6f6f4; border: 1px solid #a8a8a8; border-right-color: #ddd; border-bottom-color: #ddd; font: 15.500px/21px "Liberation Mono", monospace; color: #111; padding-left: 3px; white-space: nowrap; overflow: hidden; }
.popval sup { font-size: 8px; line-height: 0; }

/* watermark */
.watermark { position: absolute; left: 1010px; top: 620px; display: flex; gap: 8px; }
.wmlogo { width: 72px; height: 82px; flex: none; }
.wmbig { margin-top: 4px; font: bold 40px/46px "Liberation Sans", "Noto Sans CJK SC", sans-serif; color: #ffffff; letter-spacing: 1px; white-space: nowrap; }
.wmsmall { font: 13px/18px "Liberation Sans", sans-serif; color: #ffffff; letter-spacing: 3.300px; white-space: nowrap; }
```
